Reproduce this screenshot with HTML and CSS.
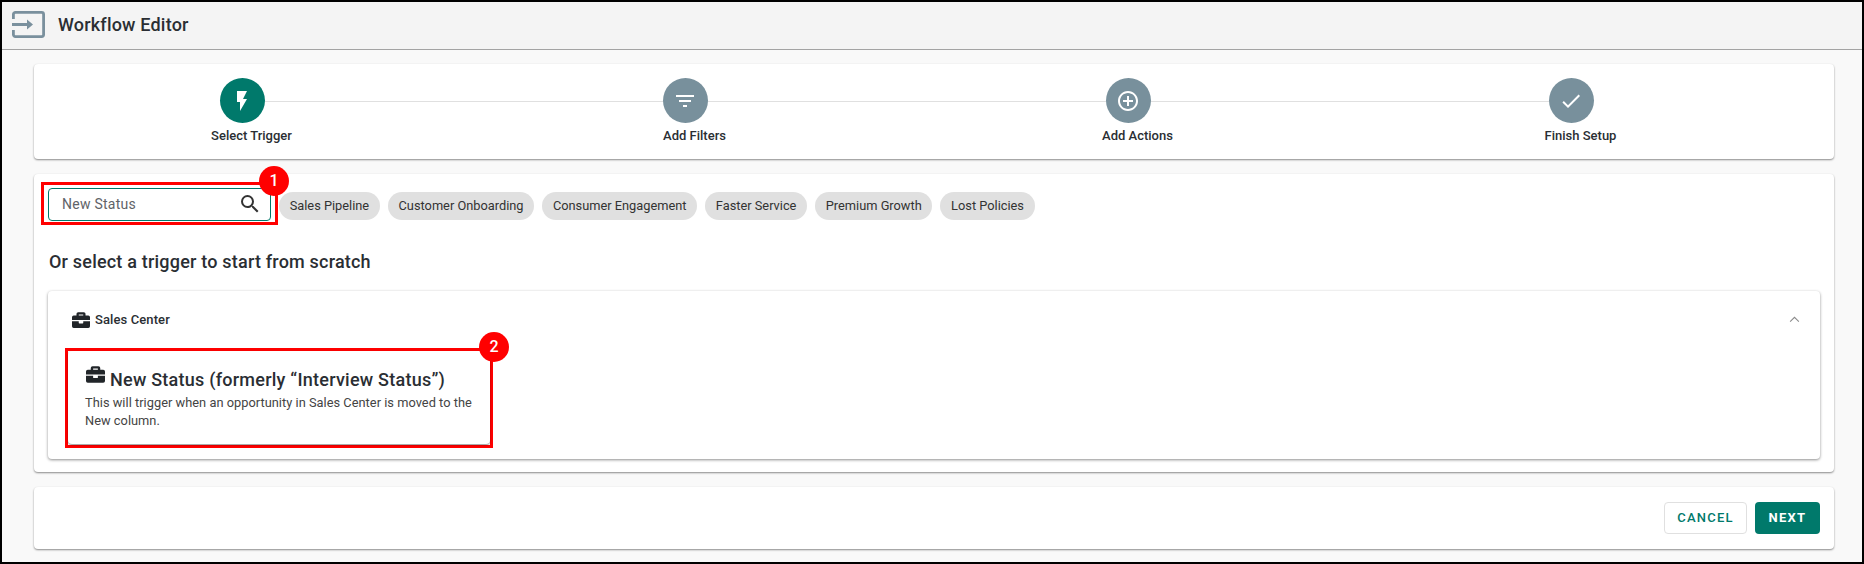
FILE: index.html
```html
<!DOCTYPE html>
<html lang="en">
<head>
<meta charset="utf-8">
<title>Workflow Editor</title>
<link rel="stylesheet" href="styles.css">
</head>
<body>
<div class="frame">
  <header class="topbar">
    <svg class="topbar-icon" viewBox="0 0 33 27"><path d="M1.4 8V3.4A2 2 0 0 1 3.4 1.4H29.6A2 2 0 0 1 31.6 3.4V23.6A2 2 0 0 1 29.6 25.6H3.4A2 2 0 0 1 1.4 23.6V19" fill="none" stroke="currentColor" stroke-width="2.8"/><path d="M0 12H15V8.5L21 13.5L15 18.5V15H0Z" fill="currentColor"/></svg>
    <h1 class="topbar-title">Workflow Editor</h1>
  </header>
  <main class="content">
    <section class="card stepper">
      <div class="step">
        <span class="step-dot step-dot-active"><svg viewBox="0 0 24 24" class="step-icon"><path d="M7 2v11h3v9l7-12h-4l4-8z"/></svg></span>
        <span class="step-label">Select Trigger</span>
      </div>
      <div class="step">
        <span class="step-dot"><svg viewBox="0 0 24 24" class="step-icon"><path d="M10 18h4v-2h-4v2zM3 6v2h18V6H3zm3 7h12v-2H6v2z"/></svg></span>
        <span class="step-label">Add Filters</span>
      </div>
      <div class="step">
        <span class="step-dot"><svg viewBox="0 0 24 24" class="step-icon"><path d="M13 7h-2v4H7v2h4v4h2v-4h4v-2h-4V7zm-1-5C6.48 2 2 6.48 2 12s4.48 10 10 10 10-4.48 10-10S17.52 2 12 2zm0 18c-4.41 0-8-3.59-8-8s3.59-8 8-8 8 3.59 8 8-3.59 8-8 8z"/></svg></span>
        <span class="step-label">Add Actions</span>
      </div>
      <div class="step">
        <span class="step-dot"><svg viewBox="0 0 24 24" class="step-icon"><path d="M9 16.17L4.83 12l-1.42 1.41L9 19 21 7l-1.41-1.41z"/></svg></span>
        <span class="step-label">Finish Setup</span>
      </div>
    </section>

    <section class="card picker">
      <div class="filters">
        <div class="search-mark">
          <div class="search">
            <span class="search-text">New Status</span>
            <svg class="search-icon" viewBox="0 0 24 24"><path d="M15.5 14h-.79l-.28-.27A6.47 6.47 0 0 0 16 9.5 6.5 6.5 0 1 0 9.5 16c1.61 0 3.09-.59 4.23-1.57l.27.28v.79l5 4.99L20.49 19l-4.99-5zm-6 0C7.01 14 5 11.99 5 9.5S7.01 5 9.5 5 14 7.01 14 9.5 11.99 14 9.5 14z"/></svg>
          </div>
          <span class="badge">1</span>
        </div>
        <div class="chips">
          <span class="chip">Sales Pipeline</span>
          <span class="chip">Customer Onboarding</span>
          <span class="chip">Consumer Engagement</span>
          <span class="chip">Faster Service</span>
          <span class="chip">Premium Growth</span>
          <span class="chip">Lost Policies</span>
        </div>
      </div>
      <h2 class="picker-title">Or select a trigger to start from scratch</h2>
      <div class="panel">
        <div class="panel-head">
          <svg class="case case-small" viewBox="0 0 512 512"><path d="M320 336a16 16 0 0 1-16 16h-96a16 16 0 0 1-16-16v-48H0v144a48 48 0 0 0 48 48h416a48 48 0 0 0 48-48V288H320zM464 128h-80V80a48 48 0 0 0-48-48H176a48 48 0 0 0-48 48v48H48a48 48 0 0 0-48 48v80h512v-80a48 48 0 0 0-48-48zm-144 0H192V96h128z"/></svg>
          <span class="panel-name">Sales Center</span>
          <svg class="chevron" viewBox="0 0 12 8"><path d="M1 6.5L6 1.5L11 6.5" fill="none" stroke="currentColor" stroke-width="1.2"/></svg>
        </div>
        <div class="trigger-mark">
          <article class="trigger">
            <div class="trigger-head">
              <svg class="case case-large" viewBox="0 0 512 512"><path d="M320 336a16 16 0 0 1-16 16h-96a16 16 0 0 1-16-16v-48H0v144a48 48 0 0 0 48 48h416a48 48 0 0 0 48-48V288H320zM464 128h-80V80a48 48 0 0 0-48-48H176a48 48 0 0 0-48 48v48H48a48 48 0 0 0-48 48v80h512v-80a48 48 0 0 0-48-48zm-144 0H192V96h128z"/></svg>
              <span class="trigger-title">New Status (formerly “Interview Status”)</span>
            </div>
            <p class="trigger-text">This will trigger when an opportunity in Sales Center is moved to the New column.</p>
          </article>
          <span class="badge">2</span>
        </div>
      </div>
    </section>

    <section class="card actions">
      <button class="btn btn-outline">CANCEL</button>
      <button class="btn btn-solid">NEXT</button>
    </section>
  </main>
</div>
</body>
</html>
```

FILE: styles.css
```css
* { box-sizing: border-box; }
html, body { margin: 0; height: 100%; }
body { font-family: Roboto, "Liberation Sans", sans-serif; color: #212529; }

.frame {
  width: 1864px;
  height: 564px;
  border: 2px solid #000;
  background: #f9f9f9;
  overflow: hidden;
}

.topbar {
  height: 48px;
  background: #f4f4f4;
  border-bottom: 1px solid #a3a3a3;
  display: flex;
  align-items: center;
  padding: 0 0 3px 10px;
}
.topbar-icon { width: 33px; height: 27px; color: #7a909d; margin-right: 13px; flex: none; }
.topbar-title { margin: 0; font-size: 18px; font-weight: 500; letter-spacing: .2px; color: #2a2e33; }

.content { padding: 14px 28px 0 32px; display: flex; flex-direction: column; gap: 15px; }

.card {
  background: #fff;
  border-radius: 4px;
  box-shadow: 0 1px 2px rgba(0,0,0,.45);
}

.stepper {
  height: 95px;
  display: flex;
  gap: 322px;
  padding: 14px 0 0 157px;
  background-image: linear-gradient(#e0e0e0, #e0e0e0);
  background-size: 1284px 1px;
  background-position: 231px 37px;
  background-repeat: no-repeat;
}
.step { width: 121px; flex: none; display: flex; flex-direction: column; align-items: center; }
.step-dot {
  width: 45px; height: 45px; border-radius: 50%;
  background: #78909c;
  margin-right: 19px;
  display: flex; align-items: center; justify-content: center;
}
.step-dot-active { background: #00796b; }
.step-icon { width: 24px; height: 24px; fill: #fff; }
.step-label { font-size: 13px; font-weight: 500; margin-top: 5px; line-height: 15px; white-space: nowrap; color: #2a2e33; }

.picker { height: 298px; padding: 8px 14px 0 14px; }
.filters { display: flex; align-items: flex-start; height: 51px; margin-left: -7px; }
.search-mark {
  position: relative;
  width: 237px; height: 43px;
  border: 3px solid #f00;
  padding: 3px 4px;
  flex: none;
}
.search {
  height: 33px;
  width: 223px;
  border: 1px solid #00796b;
  border-radius: 4px;
  display: flex; align-items: center; justify-content: space-between;
  padding: 0 8px 1px 13px;
  background: #fff;
}
.search-text { font-size: 14px; color: #5f6368; letter-spacing: .25px; }
.search-icon { width: 24px; height: 24px; fill: #333; }
.badge {
  position: absolute;
  width: 30px; height: 30px; border-radius: 50%;
  background: #f00; color: #fff;
  font-size: 16px; line-height: 30px; text-align: center; font-weight: 500;
}
.search-mark .badge { top: -19px; right: -14px; }
.chips { display: flex; gap: 8px; margin-top: 10px; margin-left: 1px; }
.chip {
  height: 28px; line-height: 28px; padding: 0 10.7px;
  border-radius: 14px; background: #e0e0e0;
  font-size: 12.8px; color: #333; white-space: nowrap;
}

.picker-title { margin: 17px 0 0 1px; font-size: 18px; font-weight: 500; line-height: 24px; letter-spacing: .2px; color: #2a2e33; }

.panel {
  margin-top: 17px;
  height: 168px;
  background: #fff;
  border-radius: 4px;
  box-shadow: 0 1px 3px rgba(0,0,0,.45);
  padding: 0 17px;
}
.panel-head { display: flex; align-items: center; height: 57px; }
.case { fill: #212529; flex: none; }
.case-small { width: 18px; height: 18px; margin: 0 5px 0 7px; }
.panel-name { font-size: 13px; font-weight: 500; letter-spacing: .1px; color: #2a2e33; }
.chevron { width: 11px; height: 7px; color: #8a8a8a; margin-left: auto; margin-right: 3px; }

.trigger-mark {
  position: relative;
  width: 428px; height: 100px;
  border: 3px solid #f00;
}
.trigger-mark .badge { top: -19px; right: -19px; }
.trigger {
  height: 93px;
  padding: 14px 17px 0;
  box-shadow: 0 1px 2px rgba(0,0,0,.45);
  border-radius: 4px;
}
.trigger-head { display: flex; align-items: flex-end; }
.case-large { width: 19px; height: 19px; margin: 0 5px 8px 1px; }
.trigger-title { font-size: 18px; font-weight: 500; line-height: 24px; letter-spacing: .24px; color: #2a2e33; }
.trigger-text { margin: 2px 0 0; font-size: 12.8px; line-height: 18px; color: #444; letter-spacing: .03px; }

.actions { height: 62px; display: flex; justify-content: flex-end; align-items: flex-start; gap: 8px; padding: 15px 14px 0 0; }
.btn {
  font-family: inherit; font-size: 13px; font-weight: 500; letter-spacing: 1.25px;
  height: 32px; border-radius: 4px; padding: 0 0 1px; cursor: pointer;
}
.btn-outline { width: 83px; background: #fff; border: 1px solid #e0e0e0; color: #00796b; }
.btn-solid { width: 65px; background: #00796b; border: 0; color: #fff; font-weight: 700; }
```
